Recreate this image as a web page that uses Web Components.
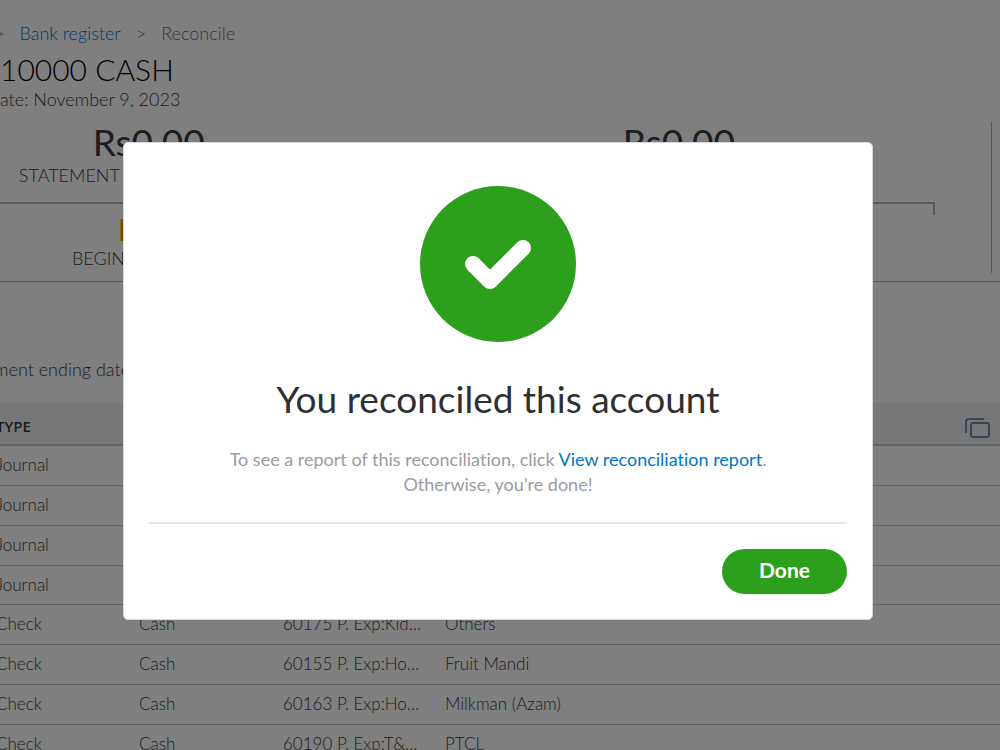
<!DOCTYPE html>
<html lang="en">
<head>
<meta charset="utf-8">
<title>Reconcile</title>
<style>
  html, body { margin: 0; height: 100%; overflow: hidden; }
  body { background: #fff; color: #393a3d; font-family: Lato, "Open Sans", sans-serif; font-size: 18px; font-weight: 300; font-variant-ligatures: none; }
</style>
</head>
<body>
<reconcile-page></reconcile-page>
<success-modal>
  <span slot="title">You reconciled this account</span>
  <span slot="action">Done</span>
</success-modal>

<script>
class ReconcileHeader extends HTMLElement {
  constructor() {
    super();
    this.attachShadow({ mode: "open" }).innerHTML = `
      <style>
        :host { display: block; padding-top: 21px; }
        nav { display: flex; gap: 15px; line-height: 24px; color: #6b6c72; white-space: nowrap; margin-left: -6px; }
        a { color: #0077c5; text-decoration: none; }
        h1 { margin: 5px 0 0; font-size: 30px; line-height: 38px; font-weight: 300; color: #000; }
        p { margin: 0; line-height: 22px; }
      </style>
      <nav aria-label="Breadcrumb"><span>&gt;</span><a href="#register">Bank register</a><span>&gt;</span><span>Reconcile</span></nav>
      <h1>10000 CASH</h1>
      <p>ate: November 9, 2023</p>`;
  }
}
customElements.define("reconcile-header", ReconcileHeader);

class BalanceFigure extends HTMLElement {
  constructor() {
    super();
    this.attachShadow({ mode: "open" }).innerHTML = `
      <style>
        :host { display: grid; justify-items: center; gap: 4px; white-space: nowrap; }
        strong { font-size: 37px; line-height: 36px; font-weight: 400; color: #393a3d; }
        :host([size=small]) strong { font-size: 30px; color: #ff8000; line-height: 28px; }
        span { line-height: 22px; text-transform: uppercase; }
      </style>
      <strong><slot name="amount"></slot></strong>
      <span><slot></slot></span>`;
  }
}
customElements.define("balance-figure", BalanceFigure);

class BalanceSummary extends HTMLElement {
  constructor() {
    super();
    this.attachShadow({ mode: "open" }).innerHTML = `
      <style>
        :host { display: flex; justify-content: space-between; height: 159px; padding-top: 12px; border-bottom: 1px solid #b4b5b8; box-sizing: content-box; }
        .figures { flex: 1; }
        .top { display: grid; grid-template-columns: 30% 1fr 27% 18%; padding-top: 2px; }
        .bracket { height: 11px; margin: 16px 56px 0 0; border: 2px solid #b4b5b8; border-width: 2px 2px 0 0; }
        .bottom { display: grid; grid-template-columns: 33% 1fr; }
        .side { width: 8px; height: 151px; border-left: 1px solid #b4b5b8; }
      </style>
      <div class="figures">
        <div class="top">
          <balance-figure><span slot="amount">Rs0.00</span>Statement ending balance</balance-figure>
          <span></span>
          <balance-figure><span slot="amount">Rs0.00</span></balance-figure>
        </div>
        <div class="bracket"></div>
        <div class="bottom">
          <balance-figure size="small"><span slot="amount">Rs0.00</span>Beginning balance</balance-figure>
        </div>
      </div>
      <div class="side"></div>`;
  }
}
customElements.define("balance-summary", BalanceSummary);

class TransactionTable extends HTMLElement {
  constructor() {
    super();
    const rows = [
      ["Journal"], ["Journal"], ["Journal"], ["Journal"],
      ["Check", "Cash", "60175 P. Exp:Kid…", "Others"],
      ["Check", "Cash", "60155 P. Exp:Ho…", "Fruit Mandi"],
      ["Check", "Cash", "60163 P. Exp:Ho…", "Milkman (Azam)"],
      ["Check", "Cash", "60190 P. Exp:T&amp;…", "PTCL"]
    ];
    const cells = r => [0, 1, 2, 3].map(i => `<td${i === 3 ? ' colspan="2"' : ""}>${r[i] || ""}</td>`).join("");
    this.attachShadow({ mode: "open" }).innerHTML = `
      <style>
        :host { display: block; margin-left: -4px; }
        table { width: 100%; border-collapse: separate; border-spacing: 0; table-layout: fixed; }
        th, td { box-sizing: border-box; padding: 0; text-align: left; white-space: nowrap; }
        th { height: 43px; padding-top: 4px; background: #eceef1; border-bottom: 2px solid #c4c6ca; font-size: 15px; font-weight: 600; font-family: "Open Sans", sans-serif; }
        td { height: 40px; padding-bottom: 1px; border-bottom: 1px solid #c4c6ca; font-size: 17px; line-height: 24px; }
        tr:nth-child(4) td { height: 39px; }
        th.icon { text-align: right; padding: 9px 9px 0 0; }
        button { border: 0; padding: 0; background: none; display: inline-block; vertical-align: middle; }
        svg { display: block; }
      </style>
      <table>
        <colgroup><col style="width:143px"><col style="width:144px"><col style="width:162px"><col><col style="width:80px"></colgroup>
        <thead><tr><th>TYPE</th><th></th><th></th><th></th><th class="icon"><button aria-label="Copy">
          <svg width="28" height="24" viewBox="0 0 28 24" fill="none" stroke="#6f8aa8" stroke-width="2">
            <path d="M3 17V6q0-3 3-3h15"/><rect x="8" y="7" width="18" height="14" rx="2"/>
          </svg></button></th></tr></thead>
        <tbody>${rows.map(r => `<tr>${cells(r)}</tr>`).join("")}</tbody>
      </table>`;
  }
}
customElements.define("transaction-table", TransactionTable);

class ReconcilePage extends HTMLElement {
  constructor() {
    super();
    this.attachShadow({ mode: "open" }).innerHTML = `
      <style>
        :host { display: block; }
        .note { margin: 0 0 0 -6px; padding: 75px 0 22px; line-height: 24px; white-space: nowrap; }
      </style>
      <reconcile-header></reconcile-header>
      <balance-summary></balance-summary>
      <p class="note">ment ending date</p>
      <transaction-table></transaction-table>`;
  }
}
customElements.define("reconcile-page", ReconcilePage);

class SuccessModal extends HTMLElement {
  constructor() {
    super();
    this.attachShadow({ mode: "open" }).innerHTML = `
      <style>
        :host { position: fixed; inset: 0; display: grid; place-items: center; padding-top: 11px; background: rgba(0, 0, 0, .5); }
        dialog { position: static; box-sizing: border-box; width: 75%; margin: 0 4px 0 0; padding: 42px 25px 25px; border: 1px solid #d4d7dc; border-radius: 5px; background: #fff; color: #393a3d; text-align: center; }
        .tick { display: block; margin: 0 auto; }
        h2 { margin: 32px 0 0; font-size: 37px; line-height: 48px; font-weight: 400; color: #2f3033; }
        p { margin: 24px 0 25px; line-height: 25px; color: #9a9ca0; font-weight: 400; }
        a { color: #0077c5; text-decoration: none; }
        footer { display: flex; justify-content: flex-end; border-top: 2px solid #e3e5e8; padding-top: 25px; }
        button { width: 125px; height: 45px; padding: 0 0 3px; border: 0; border-radius: 23px; background: #2ca01c; color: #fff; font: 700 21px/24px Lato, sans-serif; }
      </style>
      <dialog open aria-labelledby="title">
        <svg class="tick" width="158" height="158" viewBox="0 0 158 158" aria-hidden="true">
          <circle cx="79" cy="79" r="78" fill="#2ca01c"/>
          <path d="M54 79l17 17 33-33" fill="none" stroke="#fff" stroke-width="16" stroke-linecap="round" stroke-linejoin="round"/>
        </svg>
        <h2 id="title"><slot name="title"></slot></h2>
        <p>To see a report of this reconciliation, click <a href="#report">View reconciliation report</a>.<br>Otherwise, you’re done!</p>
        <footer><button type="button"><slot name="action"></slot></button></footer>
      </dialog>`;
  }
}
customElements.define("success-modal", SuccessModal);
</script>
</body>
</html>
